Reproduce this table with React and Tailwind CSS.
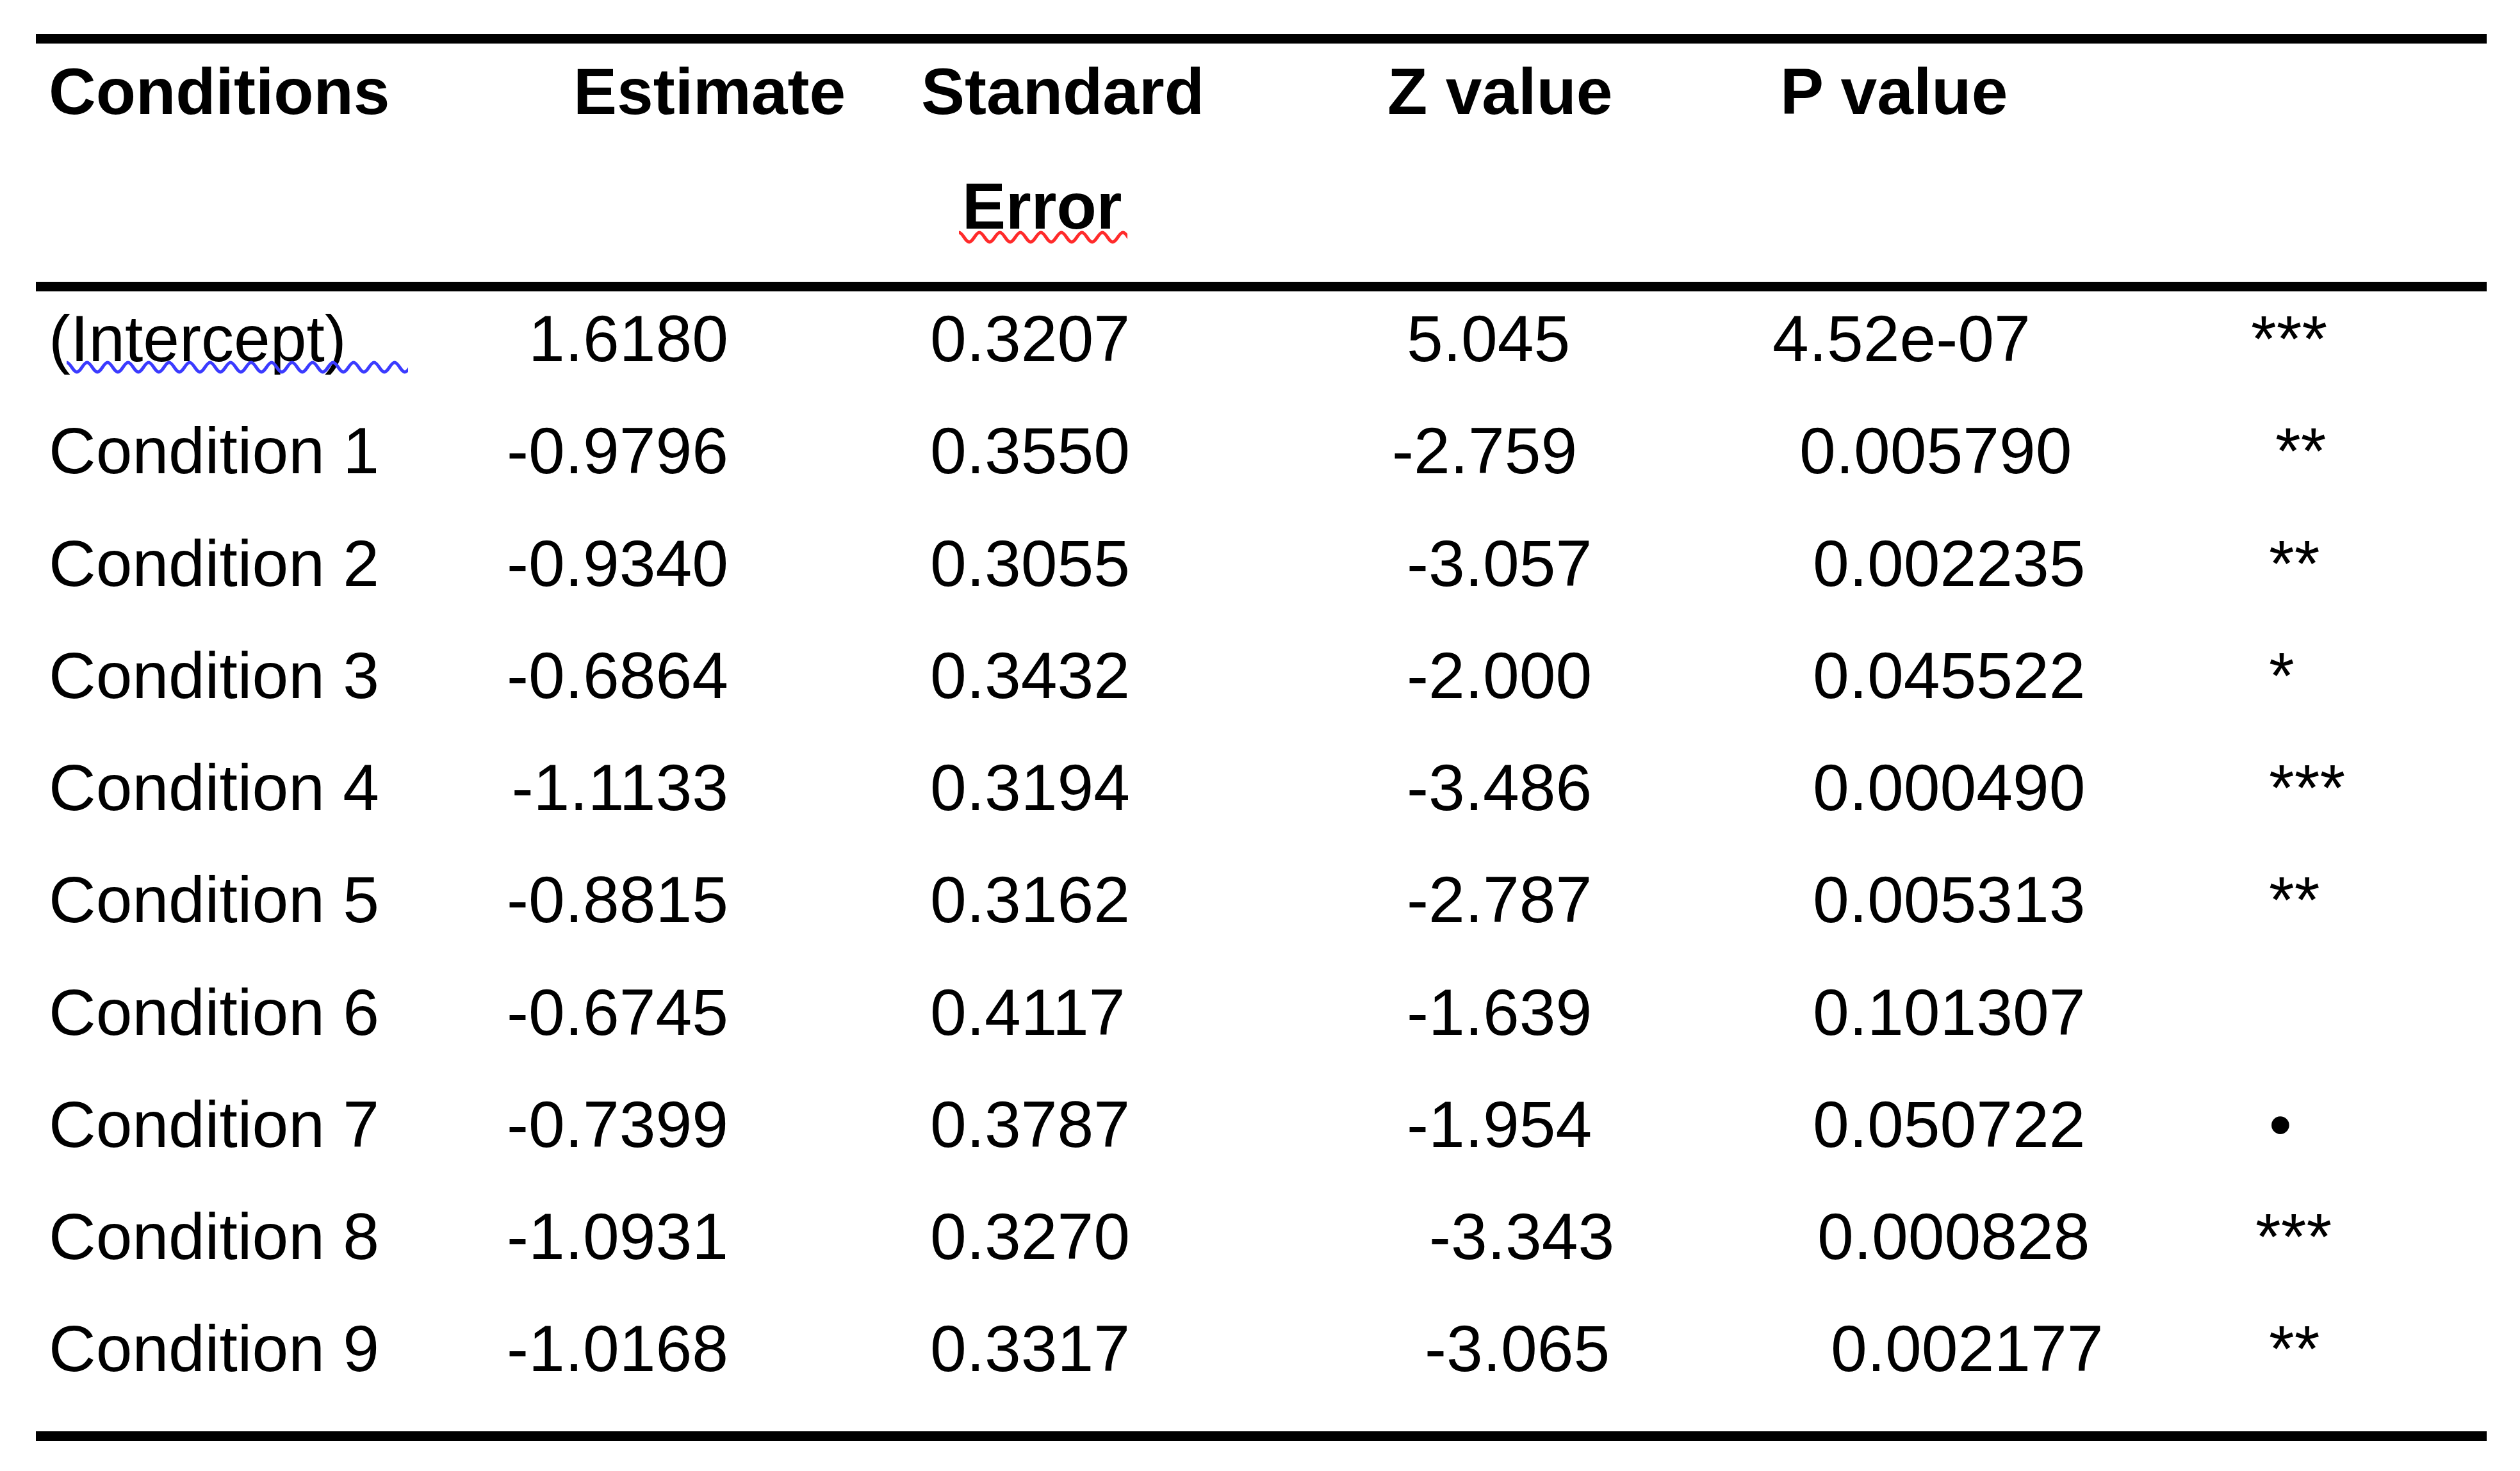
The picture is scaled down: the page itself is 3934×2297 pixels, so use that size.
import React from 'react';

const ROWS = [
  { name: '(Intercept)', est: '1.6180', se: '0.3207', z: '5.045', zp: 'pl-[46px]', p: '4.52e-07', pp: 'pl-[17px]', sig: '***', sp: 'pl-[34px]', squiggle: true },
  { name: 'Condition 1', est: '-0.9796', se: '0.3550', z: '-2.759', zp: 'pl-[23px]', p: '0.005790', pp: 'pl-[59px]', sig: '**', sp: 'pl-[72px]' },
  { name: 'Condition 2', est: '-0.9340', se: '0.3055', z: '-3.057', zp: 'pl-[46px]', p: '0.002235', pp: 'pl-[80px]', sig: '**', sp: 'pl-[62px]' },
  { name: 'Condition 3', est: '-0.6864', se: '0.3432', z: '-2.000', zp: 'pl-[46px]', p: '0.045522', pp: 'pl-[80px]', sig: '*', sp: 'pl-[62px]' },
  { name: 'Condition 4', est: '-1.1133', se: '0.3194', z: '-3.486', zp: 'pl-[46px]', p: '0.000490', pp: 'pl-[80px]', sig: '***', sp: 'pl-[62px]' },
  { name: 'Condition 5', est: '-0.8815', se: '0.3162', z: '-2.787', zp: 'pl-[46px]', p: '0.005313', pp: 'pl-[80px]', sig: '**', sp: 'pl-[62px]' },
  { name: 'Condition 6', est: '-0.6745', se: '0.4117', z: '-1.639', zp: 'pl-[46px]', p: '0.101307', pp: 'pl-[80px]', sig: '', sp: 'pl-[62px]' },
  { name: 'Condition 7', est: '-0.7399', se: '0.3787', z: '-1.954', zp: 'pl-[46px]', p: '0.050722', pp: 'pl-[80px]', sig: '•', sp: 'pl-[62px]' },
  { name: 'Condition 8', est: '-1.0931', se: '0.3270', z: '-3.343', zp: 'pl-[81px]', p: '0.000828', pp: 'pl-[87px]', sig: '***', sp: 'pl-[41px]' },
  { name: 'Condition 9', est: '-1.0168', se: '0.3317', z: '-3.065', zp: 'pl-[74px]', p: '0.002177', pp: 'pl-[108px]', sig: '**', sp: 'pl-[62px]' },
];

// word-style spell check wave
function Squiggle({ color, width, className }) {
  let d = 'M0 4';
  for (let x = 0; x < width; x += 32) {
    d += ` C${x + 6} 4 ${x + 10} 19 ${x + 16} 19 C${x + 22} 19 ${x + 26} 4 ${x + 32} 4`;
  }
  return (
    <svg className={className} width={width} height={23} viewBox={`0 0 ${width} 23`}>
      <path d={d} fill="none" stroke={color} strokeWidth="5" />
    </svg>
  );
}

const COLS = 'grid grid-cols-[734px_640px_720px_600px_730px_402px]';

export default function App() {
  return (
    <div className="min-h-screen bg-white pl-[56px] pt-[53px] font-['Liberation_Sans',Arial,sans-serif] text-[102px] text-black">
      <div className="w-[3826px] whitespace-nowrap">
        <div className="h-[15px] bg-black" />

        <div className={`${COLS} grid-rows-[150px_208px] pb-[14px] font-bold`}>
          <div className="pl-[20px] leading-[150px]">Conditions</div>
          <div className="pl-[105px] leading-[150px]">Estimate</div>
          <div className="pl-[8px] leading-[150px]">Standard</div>
          <div className="pl-[16px] leading-[150px]">Z value</div>
          <div className="pl-[29px] leading-[150px]">P value</div>
          <div />
          <div className="relative col-start-3 row-start-2 pl-[72px] leading-[208px]">
            Error
            <Squiggle color="#ff2b2b" width={263} className="absolute left-[67px] top-[141px]" />
          </div>
        </div>

        <div className="h-[15px] bg-black" />

        {ROWS.map((row) => (
          <div key={row.name} className={`${COLS} h-[175.25px] leading-[149px]`}>
            <div className="relative pl-[20px]">
              {row.name}
              {row.squiggle ? (
                <Squiggle color="#3b3bff" width={533} className="absolute left-[48px] top-[107px]" />
              ) : null}
            </div>
            <div className="pr-[293px] text-right">{row.est}</div>
            <div className="pl-[22px]">{row.se}</div>
            <div className={row.zp}>{row.z}</div>
            <div className={row.pp}>{row.p}</div>
            <div className={row.sp}>{row.sig}</div>
          </div>
        ))}

        <div className="mt-[27.5px] h-[15px] bg-black" />
      </div>
    </div>
  );
}
